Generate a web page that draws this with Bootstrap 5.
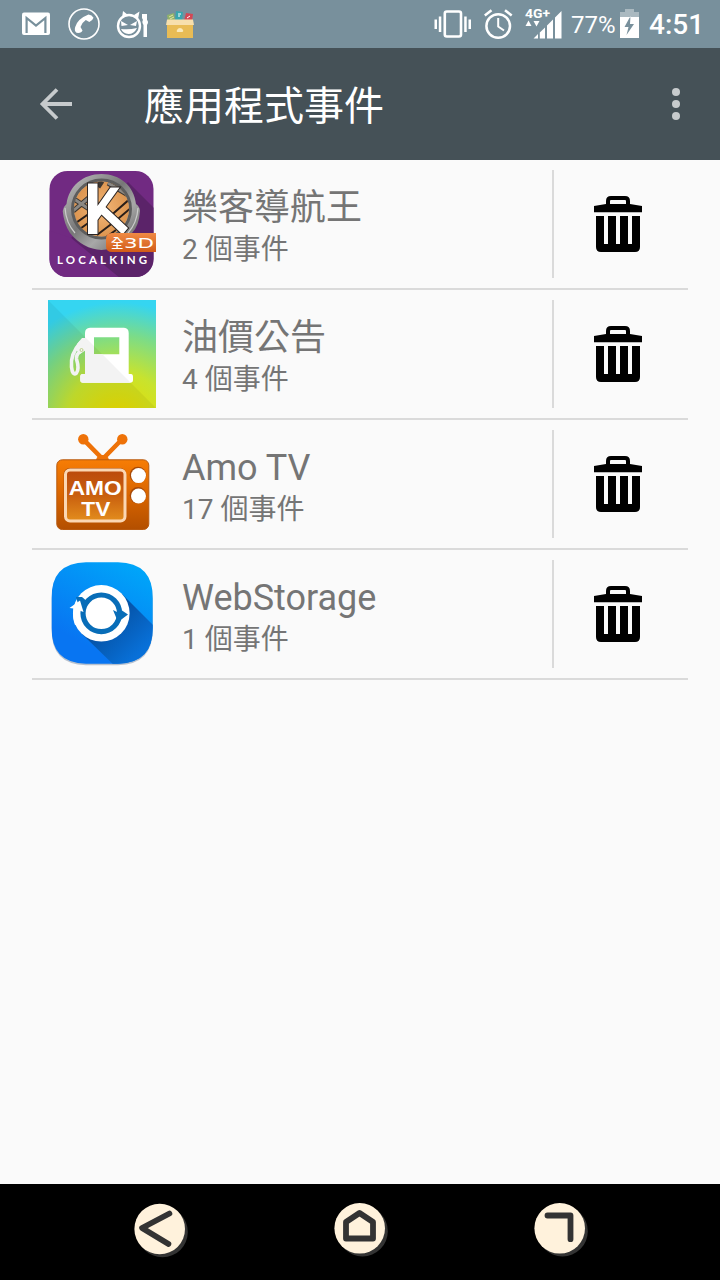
<!DOCTYPE html>
<html lang="zh-Hant">
<head>
<meta charset="utf-8">
<meta name="viewport" content="width=device-width, initial-scale=1">
<title>應用程式事件</title>
<link rel="stylesheet" href="https://cdn.jsdelivr.net/npm/bootstrap@5.3.0/dist/css/bootstrap.min.css">
<style>
body{background:#fafafa;font-family:Roboto,"Noto Sans CJK TC",sans-serif;color:#757575}
svg{display:block;flex:none}
.status-bar{height:48px;background:#78909c;color:#fff}
.app-bar{height:112px;background:#455157;color:#fff;padding:0 32px 0 32px}
.app-title{font-size:40px;line-height:48px;margin-left:64px;font-weight:400;padding-top:6px}
.event-list{margin:0 32px}
.event-row{height:130px;border-bottom:2px solid #dadada;padding:10px 0 10px 16px}
.event-text{padding:16px 0 0 26px}
.event-name{font-size:36px;line-height:44px}
.event-count{font-size:28px;line-height:40px}
.event-delete{width:136px;height:108px;border:0;border-left:2px solid #dadada;border-radius:0;background:none;padding:0 6px 0 0}
.battery-pct{font-size:24px;line-height:46px;width:44px;margin-left:8px;font-weight:400;padding-top:2px}
.clock{font-size:28px;line-height:46px;font-weight:500;margin-left:8px;padding-top:2px;width:71px}
.nav-keys{height:96px;background:#000;padding:0 60px}
</style>
</head>
<body class="d-flex flex-column vh-100 overflow-hidden">
<header>
<div class="status-bar d-flex justify-content-between">
<svg width="220" height="48" viewBox="0 0 220 48" fill="#fff">
<rect x="22" y="12.500" width="28" height="22.500" rx="2"/><path d="M26.600 33V18L36 25.500L45.400 18V33" fill="none" stroke="#78909c" stroke-width="2.200"/><path d="M27 14H45L36 21Z" fill="#fff"/>
<circle cx="84" cy="24" r="15" fill="none" stroke="#fff" stroke-width="1.600"/>
<path d="M88.500 14.500Q92 15 93.500 17.800Q92.500 21 89.300 22L85.800 20Q82 22.500 80.500 27L82.500 30.500Q81.500 33.500 76.500 32.800Q74 31 75.200 27Q77.500 18.800 88.500 14.500Z"/>
<circle cx="129" cy="26" r="11" fill="none" stroke="#fff" stroke-width="2.400"/>
<path d="M123 11L128 15L122 18ZM134 15L139.500 11.500L138 19ZM121 21L128 25L121.500 26ZM137 21L130 25L136 26ZM121 29Q129 30 137 28Q134 34 128.500 34Q123 33.500 121 29ZM142 14H147V20Q149 22 147 25V37H143.500V25Q141.500 22 143 20L142 18Z"/>
<path d="M167 15L174 13L175 21H168Z" fill="#91b26b"/><path d="M169 17L173 15M170 19L174 17" stroke="#e4e5a3"/>
<path d="M176 11L183 12L182 21H175Z" fill="#39a6ae"/><path d="M178 14H181M178 16H180" stroke="#fff"/>
<path d="M186 13L193 14L192 21H184Z" fill="#d34755"/><path d="M187 18L190 16" stroke="#fff"/>
<path d="M167 20H193V38H167Z" fill="#e9bc55"/><path d="M167 19.500H193L194 25H166Z" fill="#f7dfac"/>
<path d="M177 30Q178 28 180 28Q182 28 183 30Q184 32 181 32H178Q176 32 177 30Z" fill="#fae9ba"/>
</svg>
<div class="d-flex">
<svg width="130" height="48" viewBox="433 0 130 48" fill="#fff">
<rect x="444.800" y="11.500" width="16.200" height="25" rx="2" fill="none" stroke="#fff" stroke-width="2.600"/>
<path d="M438.800 16.500H441.300V32H438.800ZM434.500 19.500H437V29H434.500ZM464.200 16.500H466.700V32H464.200ZM468.500 19.500H471V29H468.500Z"/>
<g fill="none" stroke="#fff" stroke-width="2.500"><circle cx="498.200" cy="26" r="11.800"/><path d="M484.800 15.500L491.500 10.200M505 10.200L511.700 15.500"/><path d="M498.200 18V26.500L504 30.500" stroke-width="2"/></g>
<text x="525" y="18.300" font-size="13" font-weight="700" textLength="25" lengthAdjust="spacingAndGlyphs" font-family="Roboto">4G+</text>
<path d="M525.500 26L528.500 20.500L531.500 26ZM533.500 21H539.500L536.500 26.500ZM533.500 38.500L538 34V38.500ZM539.800 32.500L545 27.500V38.500H539.800ZM547 25.500L553 19.500V38.500H547ZM555 17.500L561.500 11V38.500H555Z"/>
</svg>
<div class="battery-pct">77%</div>
<svg width="26" height="48" viewBox="616 0 26 48"><path d="M621 12H626V9H635V12H640V18H621Z" fill="#aab9c0"/><path fill="#fff" fill-rule="evenodd" d="M621 17H640V38H621ZM631.500 16L625.500 27H629.500L627.500 35L635 24H631Z"/></svg>
<div class="clock">4:51</div>
</div>
</div>
<nav class="app-bar d-flex align-items-center justify-content-between">
<div class="d-flex align-items-center">
<svg width="48" height="48" viewBox="0 0 48 48" fill="none" stroke="#c7cbcd" stroke-width="3.800"><path d="M40 24H11M25 9.500L10.500 24L25 38.500"/></svg>
<h1 class="app-title mb-0">應用程式事件</h1>
</div>
<svg width="24" height="48" viewBox="0 0 24 48" fill="#c7cbcd"><circle cx="12" cy="12" r="4"/><circle cx="12" cy="24" r="4"/><circle cx="12" cy="36" r="4"/></svg>
</nav>
</header>

<svg width="0" height="0" class="position-absolute"><symbol id="trash" viewBox="0 0 48 56"><path fill="none" stroke="#000" stroke-width="4" d="M14 9V5Q14 2 17 2H31Q34 2 34 5V9"/><path d="M0 10L12 8H36L48 10V16.300H0ZM2 20H10V48H14V20H22V48H26V20H34V48H38V20H46V51Q46 56 41 56H7Q2 56 2 51Z"/></symbol></svg>

<main class="event-list flex-grow-1">
<div class="event-row d-flex">
<svg width="108" height="108" viewBox="0 0 108 108">
<defs>
<linearGradient id="steel" x1="0" y1="0" x2="1" y2="1"><stop offset="0" stop-color="#c5c5c5"/><stop offset=".45" stop-color="#777"/><stop offset=".65" stop-color="#a8a8a8"/><stop offset="1" stop-color="#555"/></linearGradient>
<linearGradient id="tag" x2="0" y2="1"><stop stop-color="#ef8a45"/><stop offset="1" stop-color="#d25c18"/></linearGradient>
<radialGradient id="globe"><stop stop-color="#f5b878"/><stop offset="1" stop-color="#dc9550"/></radialGradient>
<clipPath id="lens"><circle cx="53.500" cy="39" r="27.500"/></clipPath>
<clipPath id="tile"><rect x="1.500" y="1" width="104" height="106" rx="18"/></clipPath>
</defs>
<g clip-path="url(#tile)"><path d="M0 0H108V108H0Z" fill="#712a82"/><path d="M80 12L108 40V108H72L23 68Z" fill="#5b2369"/><path d="M0 60L23 68L62 108H0Z" fill="#712a82"/></g>
<path d="M53.500 4C72 4 86 16 88 34Q92 37 92 41Q91 56 84 63Q72 79 53.500 80Q35 79 22 63Q16 54 14.700 41Q15 37 18.500 34C21 16 35 4 53.500 4Z" fill="url(#steel)"/>
<path d="M17 38Q18 53 27 63M90 38Q89 53 80 63" fill="none" stroke="#ccc" stroke-width="1.200"/>
<circle cx="53.500" cy="39" r="29" fill="none" stroke="#5d5d5d" stroke-width="3"/>
<circle cx="53.500" cy="39" r="27.500" fill="url(#globe)"/>
<g clip-path="url(#lens)" fill="none">
<path d="M25 55L42 43M29 61L43 51M59 49L84 27M64 54L84 37M49 65L66 52M57 68L68 60" stroke="#291e19" stroke-width="2"/>
<path d="M25 41L43 26M26 29L41 39M50 17L54 11M60 13L82 26" stroke="#3c3732" stroke-width="5"/>
<path d="M25 41L43 26M26 29L41 39M60 13L82 26" stroke="#8b8884" stroke-width="3"/>
</g>
<path d="M40 13.500H49.500V36L62.500 17.500H71.500L57.500 37L80 58L74.500 64.500L53.500 44.500L49.500 50V64H40Z" fill="#fff" stroke="#2c2523" stroke-width="2" paint-order="stroke"/>
<path d="M64 63H108V82H64Q58 82 58 76V69Q58 63 64 63Z" fill="url(#tag)"/>
<text x="63" y="77.500" font-size="12.500" font-weight="500" fill="#fff" font-family="Noto Sans CJK TC">全</text>
<text x="76" y="78" font-size="14.500" fill="#fff" font-family="DejaVu Sans" textLength="30" lengthAdjust="spacingAndGlyphs">3D</text>
<text x="9" y="93.700" font-size="11.500" font-weight="700" fill="#fff" font-family="Lato" textLength="90">LOCALKING</text>
</svg>
<div class="event-text flex-grow-1"><div class="event-name">樂客導航王</div><div class="event-count">2 個事件</div></div>
<button class="event-delete btn d-flex align-items-center justify-content-center" aria-label="刪除"><svg width="48" height="56"><use href="#trash"/></svg></button>
</div>

<div class="event-row d-flex">
<svg width="108" height="108" viewBox="0 0 108 108">
<defs><radialGradient id="sun" gradientUnits="userSpaceOnUse" cx="70" cy="125" r="132"><stop offset=".1" stop-color="#e8dc00"/><stop offset=".4" stop-color="#c8e32e"/><stop offset=".68" stop-color="#7cdc87"/><stop offset=".93" stop-color="#35d5f1"/></radialGradient></defs>
<path d="M0 0H108V108H0Z" fill="url(#sun)"/><path d="M0 0L108 108H0Z" fill="#000" fill-opacity=".05"/>
<path fill="#fff" fill-rule="evenodd" d="M42 27.700H76Q80.700 28 80.700 33V74H83Q85 74 85 77V80Q85 82.700 82 82.700H35Q32.300 82.700 32.300 80V76Q32.300 74 35 74H37V33Q37 28 42 27.700ZM46 37.300V54.300H71.300V37.300Z"/>
<path d="M33 42Q22 54 23.500 67Q24.500 76 28.500 73Q31.500 69 28.500 59Q28 54 33 51" fill="none" stroke="#f3f3f3" stroke-width="3.600"/>
<path d="M29 44L34 38H38V50L32 54L28 50Z" fill="#f3f3f3"/><circle cx="33.500" cy="50" r="1.500" fill="none" stroke="#bccf87"/>
<path d="M37 37L46 46V54.300H54.300L82.700 82.700H35Q32.300 82.700 32.300 80V76Q32.300 74 35 74H37Z" fill="#f3f3f3"/>
</svg>
<div class="event-text flex-grow-1"><div class="event-name">油價公告</div><div class="event-count">4 個事件</div></div>
<button class="event-delete btn d-flex align-items-center justify-content-center" aria-label="刪除"><svg width="48" height="56"><use href="#trash"/></svg></button>
</div>

<div class="event-row d-flex">
<svg width="108" height="108" viewBox="0 0 108 108">
<defs>
<linearGradient id="cabinet" x2="0" y2="1"><stop stop-color="#f77d05"/><stop offset=".5" stop-color="#d96500"/><stop offset="1" stop-color="#b34f00"/></linearGradient>
<linearGradient id="screen" x2="0" y2="1"><stop stop-color="#bb4a0c"/><stop offset=".5" stop-color="#c9600f"/><stop offset="1" stop-color="#e38d1d"/></linearGradient>
</defs>
<path d="M35.300 9.300L54.700 29L74.300 9" fill="none" stroke="#ee7208" stroke-width="4.500"/><circle cx="35.300" cy="9.300" r="5.200" fill="#ee7208"/><circle cx="74.300" cy="9.300" r="5.200" fill="#ee7208"/>
<path d="M48 30Q49 25 54.700 25Q60 25 61 30Z" fill="#ee7208"/>
<rect x="8.800" y="29.800" width="92" height="69.700" rx="5.500" fill="url(#cabinet)" stroke="#b85a10"/>
<rect x="15.700" y="38" width="62.500" height="54" rx="6" fill="#a84a08"/>
<rect x="17.500" y="40" width="59.500" height="51" rx="4.500" fill="url(#screen)" stroke="#fbd7b3" stroke-width="3"/>
<circle cx="90" cy="45" r="8.300" fill="#a84a08"/><circle cx="90" cy="65.300" r="8.300" fill="#a84a08"/><circle cx="90.500" cy="45.600" r="7.500" fill="#fff"/><circle cx="90.500" cy="66" r="7.500" fill="#fff"/>
<g fill="#fff" font-family="Liberation Sans" font-weight="700" font-size="21"><text x="20.700" y="64.500" textLength="53" lengthAdjust="spacingAndGlyphs">AMO</text><text x="33.300" y="85.700" textLength="29" lengthAdjust="spacingAndGlyphs">TV</text></g>
</svg>
<div class="event-text flex-grow-1"><div class="event-name">Amo TV</div><div class="event-count">17 個事件</div></div>
<button class="event-delete btn d-flex align-items-center justify-content-center" aria-label="刪除"><svg width="48" height="56"><use href="#trash"/></svg></button>
</div>

<div class="event-row d-flex">
<svg width="108" height="108" viewBox="0 0 108 108">
<defs>
<linearGradient id="sky" x1=".75" y1="0" x2=".3" y2=".8"><stop stop-color="#00a5f9"/><stop offset="1" stop-color="#0875f2"/></linearGradient>
<linearGradient id="cast" gradientUnits="userSpaceOnUse" x1="55" y1="55" x2="92" y2="92"><stop stop-color="#054e9e"/><stop offset="1" stop-color="#0870d8"/></linearGradient>
<path id="squircle" d="M38 2.300H70Q105 3 104.700 38V68Q105 103 70 103.700H38Q3 103 3.700 68V38Q3 3 38 2.300Z"/>
<clipPath id="squircleClip"><use href="#squircle"/></clipPath>
</defs>
<use href="#squircle" y="1.500" fill="#8a9bb0" fill-opacity=".6"/><use href="#squircle" fill="url(#sky)"/>
<path clip-path="url(#squircleClip)" d="M73 33L112 72V112H73L33 73Z" fill="url(#cast)"/>
<circle cx="53.300" cy="53.300" r="28.300" fill="#fff"/>
<circle cx="53.300" cy="53.300" r="18.300" fill="none" stroke="#086db8" stroke-width="5.200"/>
<path d="M28 37L34 37L41 43L36 50L31 47Z" fill="#086db8"/>
<path d="M21.500 48L32 40.500L35.500 52L31.500 50.500Q31 58 34 63L27 65Q24 57 25.500 48.500Z" fill="#fff"/>
<path d="M65 50L69 52L74 50.500L80 54.500L70 62Z" fill="#086db8"/>
</svg>
<div class="event-text flex-grow-1"><div class="event-name">WebStorage</div><div class="event-count">1 個事件</div></div>
<button class="event-delete btn d-flex align-items-center justify-content-center" aria-label="刪除"><svg width="48" height="56"><use href="#trash"/></svg></button>
</div>
</main>

<footer class="nav-keys d-flex justify-content-between">
<svg width="200" height="96" viewBox="60 1184 200 96"><circle cx="162.500" cy="1232" r="25.300" fill="#333"/><circle cx="159.700" cy="1229" r="25.300" fill="#fff2dc"/><path d="M169.500 1213.500L142 1228L168.500 1244" fill="none" stroke="#333" stroke-width="5.600" stroke-linecap="round" stroke-linejoin="round"/></svg>
<svg width="200" height="96" viewBox="260 1184 200 96"><circle cx="362.500" cy="1231.200" r="25.300" fill="#333"/><circle cx="359.700" cy="1228.300" r="25.300" fill="#fff2dc"/><path d="M346 1238.500V1222L359.500 1213L373 1222V1238.500Z" fill="none" stroke="#333" stroke-width="5.800" stroke-linejoin="round"/></svg>
<svg width="200" height="96" viewBox="460 1184 200 96"><circle cx="562.500" cy="1231.200" r="25.300" fill="#333"/><circle cx="559.700" cy="1228.300" r="25.300" fill="#fff2dc"/><path d="M547.500 1215.500H570.500V1239.200" fill="none" stroke="#333" stroke-width="5.800" stroke-linecap="round" stroke-linejoin="round"/></svg>
</footer>
<script src="https://cdn.jsdelivr.net/npm/bootstrap@5.3.0/dist/js/bootstrap.bundle.min.js"></script>
</body>
</html>
